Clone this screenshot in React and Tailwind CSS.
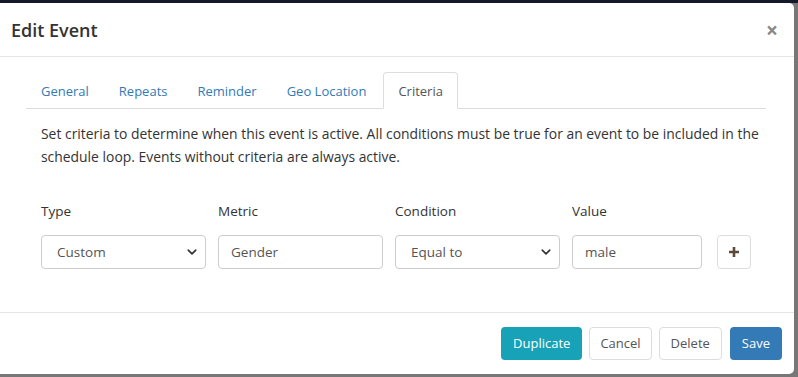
import React from 'react'

const tabs = ['General', 'Repeats', 'Reminder', 'Geo Location']

const Chevron = () => (
  <svg className="absolute right-[8px] top-1/2 -translate-y-1/2" width="10" height="10" viewBox="0 0 16 16">
    <path d="M2 5l6 6 6-6" fill="none" stroke="#333" strokeWidth="2.6" strokeLinecap="round" strokeLinejoin="round" />
  </svg>
)

const SelectBox = ({ value, w }) => (
  <div className={`relative ${w} h-[34px] border border-[#ccc] rounded-[4px] bg-white flex items-center pl-[15px] text-[13.5px] text-[#555]`}>
    {value}
    <Chevron />
  </div>
)

const InputBox = ({ value, w }) => (
  <div className={`${w} h-[34px] border border-[#ccc] rounded-[4px] bg-white flex items-center pl-[12px] text-[13.5px] text-[#555]`}>
    {value}
  </div>
)

const EditEvent = () => {
  return (
    <div className="w-[798px] h-[377px] bg-[#777] relative overflow-hidden" style={{ fontFamily: '"Open Sans", "Noto Sans", sans-serif' }}>
      <div className="h-[3px] bg-[#141a2b]" />
      <div className="w-[794px] h-[371px] bg-white rounded-r-[5px] flex flex-col text-[#333]">
        {/* Header */}
        <div className="h-[54px] border-b border-[#e5e5e5] flex items-center justify-between pl-[11px] pr-[16px] pt-[2px]">
          <h4 className="text-[18px] font-semibold text-[#333]">Edit Event</h4>
          <span className="text-[21px] font-bold text-[#888] leading-none">×</span>
        </div>

        {/* Body */}
        <div className="flex-1 pt-[15px] pl-[26px] pr-[28px]">
          <div className="flex border-b border-[#ddd] h-[37px]">
            {tabs.map((t) => (
              <div key={t} className="px-[15px] pt-[3px] h-[36px] flex items-center text-[13px] text-[#337ab7]">{t}</div>
            ))}
            <div className="ml-[2px] px-[14px] pt-[3px] h-[37px] flex items-center text-[13px] text-[#555] bg-white border border-[#ddd] border-b-white rounded-t-[4px]">Criteria</div>
          </div>

          <div className="pl-[15px]">
            <p className="mt-[13px] w-[730px] text-[13.9px] leading-[23px] text-[#333]">
              Set criteria to determine when this event is active. All conditions must be true for an event to be included in the schedule loop. Events without criteria are always active.
            </p>

            <div className="mt-[33px] flex gap-[12px] text-[13.5px]">
              <div className="w-[165px]">Type</div>
              <div className="w-[165px]">Metric</div>
              <div className="w-[165px]">Condition</div>
              <div className="w-[130px]">Value</div>
            </div>
            <div className="mt-[14px] flex items-center gap-[12px]">
              <SelectBox value="Custom" w="w-[165px]" />
              <InputBox value="Gender" w="w-[165px]" />
              <SelectBox value="Equal to" w="w-[165px]" />
              <InputBox value="male" w="w-[130px]" />
              <div className="ml-[3px] w-[34px] h-[34px] border border-[#ddd] rounded-[4px] flex items-center justify-center">
                <svg width="12" height="12" viewBox="0 0 12 12">
                  <path d="M6 1v10M1 6h10" stroke="#5b4a3a" strokeWidth="2.6" />
                </svg>
              </div>
            </div>
          </div>
        </div>

        {/* Footer */}
        <div className="h-[62px] border-t border-[#e5e5e5] flex items-start justify-end gap-[7px] pt-[14px] pr-[12px] text-[13px]">
          <button className="h-[33px] px-[12px] rounded-[4px] bg-[#17a2b8] text-white">Duplicate</button>
          <button className="h-[33px] px-[10px] rounded-[4px] border border-[#ddd] text-[#555] bg-white">Cancel</button>
          <button className="h-[33px] px-[11px] rounded-[4px] border border-[#ddd] text-[#555] bg-white">Delete</button>
          <button className="ml-[1px] h-[33px] px-[12px] rounded-[4px] bg-[#337ab7] text-white">Save</button>
        </div>
      </div>
    </div>
  )
}

export default EditEvent
